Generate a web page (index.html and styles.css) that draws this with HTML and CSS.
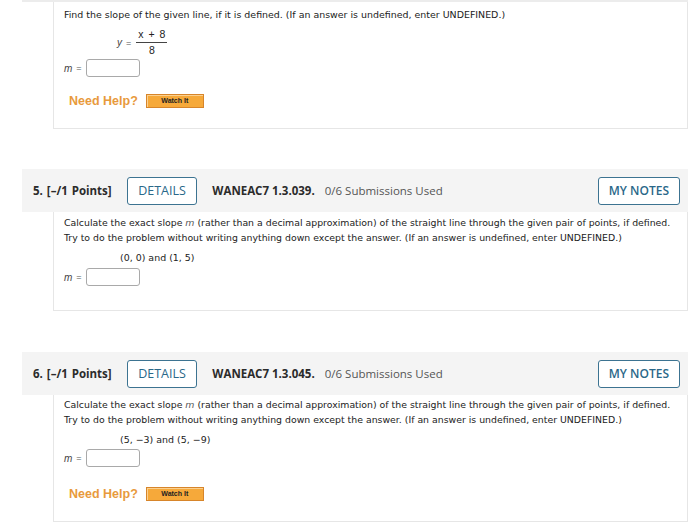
FILE: index.html
```html
<!DOCTYPE html>
<html>
<head>
<meta charset="utf-8">
<link rel="stylesheet" href="styles.css">
</head>
<body>
<div class="page">
  <div class="topstrip"></div>
  <div class="qbody first">
    <p class="prompt">Find the slope of the given line, if it is defined. (If an answer is undefined, enter UNDEFINED.)</p>
    <div class="eq">
      <span class="var">y</span><span class="op">=</span>
      <span class="frac"><span class="num">x + 8</span><span class="den">8</span></span>
    </div>
    <div class="answer"><span class="var">m</span><span class="op">=</span><span class="box"></span></div>
    <div class="help"><span class="needhelp">Need Help?</span><span class="watch">Watch It</span></div>
  </div>

  <div class="question q5">
    <div class="qhead">
      <span class="qnum">5. [–/1 Points]</span>
      <span class="btn">DETAILS</span>
      <span class="code">WANEAC7 1.3.039.</span>
      <span class="subs">0/6 Submissions Used</span>
      <span class="btn notes">MY NOTES</span>
    </div>
    <div class="qbody">
      <div class="prompt">
        <div class="line">Calculate the exact slope <i class="mi">m</i> (rather than a decimal approximation) of the straight line through the given pair of points, if defined.</div>
        <div class="line">Try to do the problem without writing anything down except the answer. (If an answer is undefined, enter UNDEFINED.)</div>
      </div>
      <p class="points">(0, 0) and (1, 5)</p>
      <div class="answer"><span class="var">m</span><span class="op">=</span><span class="box"></span></div>
    </div>
  </div>

  <div class="question q6">
    <div class="qhead">
      <span class="qnum">6. [–/1 Points]</span>
      <span class="btn">DETAILS</span>
      <span class="code">WANEAC7 1.3.045.</span>
      <span class="subs">0/6 Submissions Used</span>
      <span class="btn notes">MY NOTES</span>
    </div>
    <div class="qbody">
      <div class="prompt">
        <div class="line">Calculate the exact slope <i class="mi">m</i> (rather than a decimal approximation) of the straight line through the given pair of points, if defined.</div>
        <div class="line">Try to do the problem without writing anything down except the answer. (If an answer is undefined, enter UNDEFINED.)</div>
      </div>
      <p class="points">(5, −3) and (5, −9)</p>
      <div class="answer"><span class="var">m</span><span class="op">=</span><span class="box"></span></div>
      <div class="help"><span class="needhelp">Need Help?</span><span class="watch">Watch It</span></div>
    </div>
  </div>
</div>
</body>
</html>
```
FILE: styles.css
```css
html, body {
  margin: 0;
  padding: 0;
  background: #ffffff;
}
body {
  font-family: "DejaVu Sans", Verdana, sans-serif;
  color: #222;
  width: 700px;
  height: 525px;
  overflow: hidden;
}
.page {
  padding-left: 22px;
  width: 666px;
}
.topstrip {
  height: 2px;
  background: #ececec;
}
.qbody {
  margin-left: 31px;
  border: 1px solid #e6e6e6;
  border-top: none;
  padding: 0 10px 0 10px;
}
.qbody.first {
  padding-top: 5px;
  box-sizing: border-box;
  height: 127px;
}
.prompt {
  margin: 0;
  font-size: 9.35px;
  line-height: 15px;
  color: #222;
}
.line {
  white-space: nowrap;
}
.first .prompt {
  font-size: 9.45px;
}
.mi {
  font-style: italic;
  color: #555;
}
.eq {
  display: flex;
  align-items: center;
  margin: 6px 0 0 53px;
  font-family: "Liberation Sans", Arial, sans-serif;
  font-size: 10.5px;
  color: #222;
}
.var {
  font-family: "Liberation Sans", Arial, sans-serif;
  font-style: italic;
  font-size: 10px;
  color: #444;
}
.op {
  font-family: "Liberation Sans", Arial, sans-serif;
  font-size: 9px;
  color: #555;
  margin: 0 5px 0 4px;
}
.frac {
  display: inline-flex;
  flex-direction: column;
  align-items: center;
}
.num {
  padding: 0 2px 1px;
  border-bottom: 1px solid #444;
  line-height: 13px;
  word-spacing: 2px;
}
.den {
  line-height: 14px;
}
.answer {
  display: flex;
  align-items: center;
  margin-top: 2px;
}
.answer .box {
  width: 52px;
  height: 16px;
  border: 1px solid #a9a9a9;
  border-radius: 3px;
  margin-left: -1px;
}
.help {
  display: flex;
  align-items: center;
  margin: 17px 0 0 5px;
}
.needhelp {
  font-family: "Liberation Sans", Arial, sans-serif;
  font-weight: bold;
  font-size: 12.5px;
  color: #e89a3c;
}
.watch {
  margin-left: 8px;
  width: 58px;
  height: 14px;
  box-sizing: border-box;
  background: #f6a93a;
  border: 1px solid #d7852a;
  box-shadow: inset 1px 1px 0 #fbd08f;
  font-family: "Liberation Sans", Arial, sans-serif;
  font-weight: bold;
  font-size: 7px;
  line-height: 12px;
  text-align: center;
  color: #222;
}
.question.q5 {
  margin-top: 40px;
}
.question.q6 {
  margin-top: 41px;
}
.qhead {
  display: flex;
  align-items: center;
  height: 43px;
  background: #f4f4f4;
  padding: 0 8px 0 11px;
  font-family: "Open Sans", sans-serif;
  font-size: 11.5px;
}
.qnum {
  font-weight: bold;
  color: #2b2b2b;
  word-spacing: 1px;
}
.btn {
  display: flex;
  align-items: center;
  justify-content: center;
  height: 28px;
  box-sizing: border-box;
  border: 1px solid #3c7391;
  border-radius: 3px;
  background: #fff;
  color: #2a6889;
  font-size: 12.5px;
  font-weight: 500;
  padding: 0 10.5px;
  margin-left: 15px;
}
.code {
  font-weight: bold;
  color: #2b2b2b;
  margin-left: 15px;
}
.subs {
  color: #555;
  margin-left: 10px;
}
.btn.notes {
  margin-left: auto;
  font-weight: 600;
  font-size: 12px;
  padding: 0 10px;
}
.q5 .qbody {
  padding-top: 3px;
  height: 99px;
  box-sizing: border-box;
}
.q6 .qbody {
  padding-top: 2px;
  height: 127px;
  box-sizing: border-box;
}
.points {
  margin: 6px 0 0 56px;
  font-size: 9.45px;
  line-height: 13px;
  color: #222;
}
.q5 .answer {
  margin-top: 4px;
}
.q6 .answer {
  margin-top: 3px;
}
.q6 .help {
  margin-top: 20px;
}
```
